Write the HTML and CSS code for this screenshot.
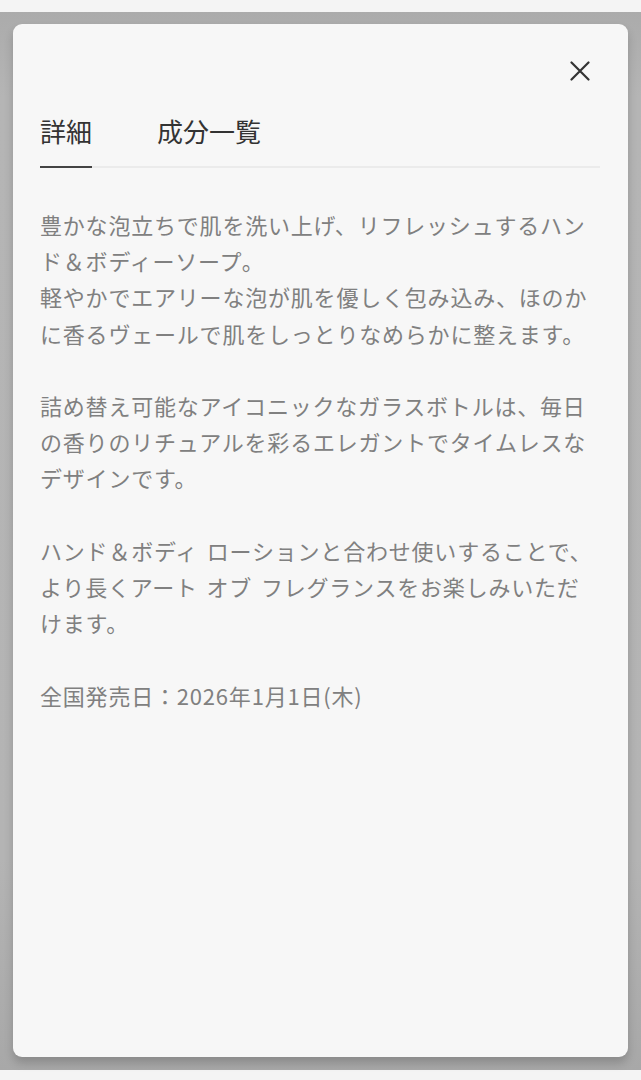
FILE: index.html
```html
<!DOCTYPE html>
<html lang="ja">
<head>
<meta charset="utf-8">
<title>詳細</title>
<link rel="stylesheet" href="styles.css">
</head>
<body>
<div class="backdrop">
  <div class="modal">
    <div class="modal-top">
      <button class="close" aria-label="閉じる">
        <svg viewBox="0 0 20 20" width="20" height="20"><path d="M1.5 1.5 L18.5 18.5 M18.5 1.5 L1.5 18.5" stroke="#333" stroke-width="2.2" fill="none" stroke-linecap="round"/></svg>
      </button>
    </div>
    <div class="tabs">
      <div class="tab active">詳細</div>
      <div class="tab">成分一覧</div>
    </div>
    <div class="content">
      <p>豊かな泡立ちで肌を洗い上げ、リフレッシュするハンド＆ボディーソープ。<br>軽やかでエアリーな泡が肌を優しく包み込み、ほのかに香るヴェールで肌をしっとりなめらかに整えます。</p>
      <p>詰め替え可能なアイコニックなガラスボトルは、毎日の香りのリチュアルを彩るエレガントでタイムレスなデザインです。</p>
      <p>ハンド＆ボディ ローションと合わせ使いすることで、より長くアート オブ フレグランスをお楽しみいただけます。</p>
      <p>全国発売日：2026年1月1日(木)</p>
    </div>
  </div>
</div>
</body>
</html>
```
FILE: styles.css
```css
html, body {
  margin: 0;
  padding: 0;
}
body {
  background: #f4f4f4;
  font-family: "Noto Sans CJK JP", "Noto Sans", sans-serif;
  padding-top: 12px;
  height: 1080px;
  box-sizing: border-box;
}
.backdrop {
  height: 1058px;
  box-sizing: border-box;
  padding: 12px 13px 13px 13px;
  background: linear-gradient(to bottom, #ababab 0%, #b5b5b5 8%, #b4b4b4 80%, #a8a8a8 100%);
}
.modal {
  height: 100%;
  background: #f7f7f7;
  border-radius: 9px;
  box-shadow: 0 6px 10px rgba(0,0,0,0.18);
  padding: 0 28px 0 27px;
  box-sizing: border-box;
}
.modal-top {
  display: flex;
  justify-content: flex-end;
  padding-top: 37px;
  height: 48px;
  box-sizing: content-box;
  padding-right: 10px;
}
.close {
  background: none;
  border: 0;
  padding: 0;
  width: 20px;
  height: 20px;
  display: flex;
}
.tabs {
  display: flex;
  gap: 65px;
  border-bottom: 2px solid #ebebeb;
  margin-top: 3px;
}
.tab {
  font-size: 26px;
  line-height: 38px;
  color: #333;
  padding-bottom: 16px;
  margin-bottom: -2px;
  letter-spacing: 0;
}
.tab.active {
  border-bottom: 2px solid #444;
}
.content {
  padding-top: 38px;
  color: #808080;
  font-size: 22px;
  letter-spacing: 0.8px;
  word-spacing: 3px;
  line-height: 36.2px;
}
.content p {
  margin: 0 0 36.2px 0;
}
```
